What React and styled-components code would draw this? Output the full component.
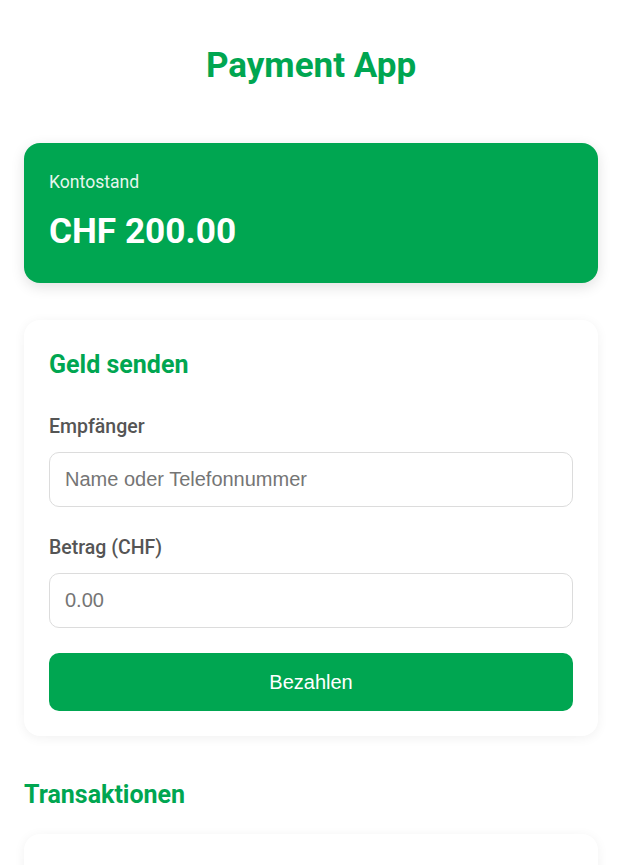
import { useState } from "react";
import styled, { createGlobalStyle } from "styled-components";

const GlobalStyle = createGlobalStyle`
  * {
    box-sizing: border-box;
  }
  body {
    margin: 0;
    background: #ffffff;
    font-family: Roboto, "Noto Sans", sans-serif;
    line-height: 1.6;
    color: #333;
  }
`;

const green = "#00a651";

const Page = styled.div`
  padding: 20px 24px;
  max-width: 622px;
  margin: 0 auto;
`;

const Title = styled.h1`
  margin: 18px 0 49px;
  text-align: center;
  color: ${green};
  font-size: 35px;
  font-weight: 700;
`;

const BalanceCard = styled.div`
  background: ${green};
  color: #fff;
  border-radius: 16px;
  padding: 25px;
  height: 140px;
  box-shadow: 0 4px 14px rgba(0, 0, 0, 0.12);
  margin-bottom: 37px;
`;

const BalanceLabel = styled.div`
  font-size: 17.6px;
  opacity: 0.9;
  margin-bottom: 7px;
`;

const BalanceAmount = styled.div`
  font-size: 35.2px;
  font-weight: 700;
`;

const Card = styled.div`
  background: #fff;
  border-radius: 16px;
  padding: 25px;
  min-height: ${(p) => p.$minHeight || "auto"};
  box-shadow: 0 2px 12px rgba(0, 0, 0, 0.06);
`;

const SectionTitle = styled.h2`
  margin: ${(p) => (p.$outside ? "39px 0 19px" : "0 0 26px")};
  color: ${green};
  font-size: 25px;
  font-weight: 700;
`;

const Field = styled.div`
  margin-bottom: 25.5px;
`;

const Label = styled.label`
  display: block;
  font-size: 19.5px;
  font-weight: 500;
  color: #555;
  margin-bottom: 9.5px;
`;

const Input = styled.input`
  display: block;
  width: 100%;
  padding: 15px 15px;
  font-family: "Liberation Sans", Arial, sans-serif;
  font-size: 20px;
  border: 1px solid #dcdcdc;
  border-radius: 10px;
  outline: none;
  color: #333;
  &::placeholder {
    color: #757575;
  }
`;

const PayButton = styled.button`
  display: block;
  width: 100%;
  height: 58px;
  border: none;
  border-radius: 10px;
  background: ${green};
  color: #fff;
  font-family: "Liberation Sans", Arial, sans-serif;
  font-size: 20px;
  cursor: pointer;
`;

export default function App() {
  const [recipient, setRecipient] = useState("");
  const [amount, setAmount] = useState("");

  return (
    <Page>
      <GlobalStyle />
      <Title>Payment App</Title>

      <BalanceCard>
        <BalanceLabel>Kontostand</BalanceLabel>
        <BalanceAmount>CHF 200.00</BalanceAmount>
      </BalanceCard>

      <Card>
        <SectionTitle>Geld senden</SectionTitle>
        <Field>
          <Label htmlFor="recipient">Empfänger</Label>
          <Input
            id="recipient"
            placeholder="Name oder Telefonnummer"
            value={recipient}
            onChange={(e) => setRecipient(e.target.value)}
          />
        </Field>
        <Field>
          <Label htmlFor="amount">Betrag (CHF)</Label>
          <Input
            id="amount"
            type="number"
            placeholder="0.00"
            value={amount}
            onChange={(e) => setAmount(e.target.value)}
          />
        </Field>
        <PayButton>Bezahlen</PayButton>
      </Card>

      <SectionTitle $outside>Transaktionen</SectionTitle>
      <Card $minHeight="120px" />
    </Page>
  );
}
